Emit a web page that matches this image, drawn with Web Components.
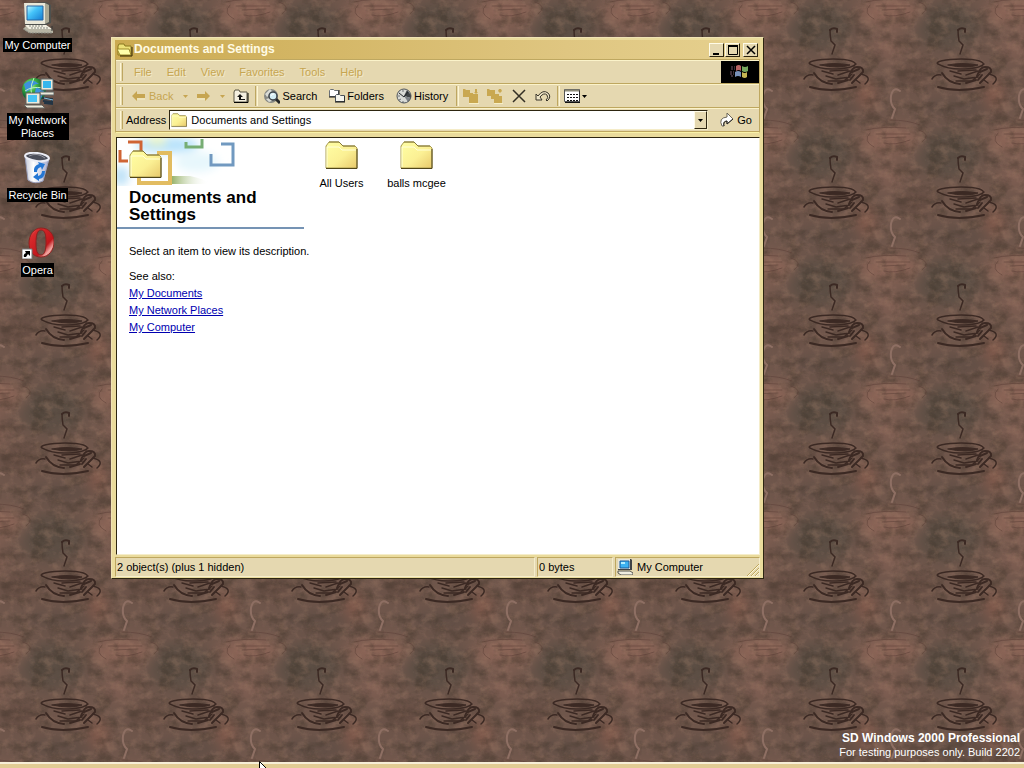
<!DOCTYPE html>
<html lang="en">
<head>
<meta charset="utf-8">
<title>Documents and Settings</title>
<style>
    html, body { height: 100%; margin: 0; }
    body {
        overflow: hidden;
        font: 11px/13px "Liberation Sans", Arial, sans-serif;
        color: #000;
        --face: #e5d8b0;
        --light: #f7efc4;
        --shade: #bea760;
        --gold: #c6a551;
        --dark: #2d2510;
    }
</style>
</head>
<body>
<desk-top>
    <desktop-icon slot="icons" icon="computer">My Computer</desktop-icon>
    <desktop-icon slot="icons" icon="network">My Network Places</desktop-icon>
    <desktop-icon slot="icons" icon="recycle">Recycle Bin</desktop-icon>
    <desktop-icon slot="icons" icon="opera">Opera</desktop-icon>
    <explorer-window slot="window" heading="Documents and Settings">
        <folder-item>All Users</folder-item>
        <folder-item>balls mcgee</folder-item>
    </explorer-window>
</desk-top>

<script>
const folder = `
    <defs><linearGradient id="f" x2="1" y2="1"><stop stop-color="#ffffa4"/><stop offset=".55" stop-color="#fbf094"/><stop offset="1" stop-color="#e8c96c"/></linearGradient></defs>
    <path d="M1 28V6l3-4h10l4 4h12l2 2v20z" fill="url(#f)" stroke="#a89b50"/>
    <path d="M2 27V7h12l3 3h14" fill="none" stroke="#ffffd8"/>
    <path d="M1 28.500h31V9" fill="none" stroke="#50451a"/>
    <path d="M4 2h10l4 4h12" fill="none" stroke="#857838"/>`;

const ICONS = {
    computer: ['0 0 32 32', `
        <defs><linearGradient id="s" x2="1" y2="1"><stop stop-color="#c4f8ff"/><stop offset=".4" stop-color="#45c4fa"/><stop offset="1" stop-color="#1479cf"/></linearGradient></defs>
        <path d="M2 1l22-1 5 3v18l-5 2H3z" fill="#4e514e"/>
        <path d="M2 1h21v21H3z" fill="#e9e7d8"/>
        <path d="M23 1l4 2v17l-4 2z" fill="#aaa894"/>
        <path d="M5 4h16v14H5z" fill="url(#s)" stroke="#2865a0"/>
        <path d="M5 23h19l7 5v3H7L1 27z" fill="#b6b4a4"/>
        <path d="M3 23h21l6 4H7z" fill="#f2f0e2"/>
        <path d="M7 24h15M9 26h17M2 27l6 4h22" stroke="#858780" stroke-dasharray="2 1" fill="none"/>
        <path d="M30 24v5" stroke="#333"/>`],
    zone: ['0 0 16 16', `
        <path d="M1 0h13l1 1v10H1z" fill="#3d4146"/>
        <path d="M1 0h12v10H1z" fill="#e6e5da"/>
        <path d="M3 2h9v7H3z" fill="#3cb2f2" stroke="#1a5a9a"/>
        <path d="M4 3h4v2H4z" fill="#b2eeff"/>
        <path d="M1 12h12l3 2v2H4l-3-2z" fill="#f0eee0" stroke="#55554e"/>`],
    network: ['0 0 32 32', `
        <defs><radialGradient id="g" cx=".35" cy=".3"><stop stop-color="#b0f3a0"/><stop offset=".5" stop-color="#43b444"/><stop offset="1" stop-color="#126e34"/></radialGradient></defs>
        <circle cx="12" cy="13" r="12" fill="url(#g)"/>
        <path d="M2 7q8-7 15 0-8 0-7 5l-6 3zM14 10l8 4-4 10-6-4z" fill="#3d91db"/>
        <path d="M3 14q7-5 18-3M12 1q-6 12 0 23" fill="none" stroke="#bff4c0"/>
        <path d="M19 2h12v11H19zM18 15h14v3H18z" fill="#eceadb" stroke="#5f686b"/>
        <path d="M21 4h8v7h-8z" fill="#36b6ed"/>
        <path d="M4 16h14v11H4zM2 28h18l3 3H5z" fill="#eceadb" stroke="#61615c"/>
        <path d="M6 18h9v7H6z" fill="#48c3f4"/>
        <path d="M20 21l10 1v3l-9-1M22 26l9 1" fill="none" stroke="#233443" stroke-width="2"/>
        <path d="M22 21l9 2" stroke="#8ac2df"/>`],
    recycle: ['0 0 32 32', `
        <defs><linearGradient id="b" x2="1"><stop stop-color="#c5cad9"/><stop offset=".35" stop-color="#fff"/><stop offset="1" stop-color="#a4aacd"/></linearGradient></defs>
        <path d="M3 4l3 24q7 5 15 1l6-22z" fill="url(#b)" stroke="#9a9fba"/>
        <ellipse cx="15" cy="5" rx="12" ry="4" fill="#4c4f5b" stroke="#ecedf5" stroke-width="2" transform="rotate(7 15 5)"/>
        <path d="M7 4q8-4 16 2" fill="none" stroke="#94949c"/>
        <path d="M12 20q-1-6 5-8l-1-2 7 2-3 6-1-3q-4 1-4 5zM23 19q0 7-6 8v2l-6-4 5-4v3q4-1 4-5z" fill="#2577d4"/>`],
    opera: ['0 0 32 32', `
        <defs><linearGradient id="o" x2="1" y2="1"><stop stop-color="#f7a09a"/><stop offset=".2" stop-color="#d82a2c"/><stop offset=".65" stop-color="#c0161b"/><stop offset=".8" stop-color="#f3aaa4"/><stop offset="1" stop-color="#a10c0f"/></linearGradient></defs>
        <path fill-rule="evenodd" d="M19 1c8 0 13 6 13 14s-5 15-13 15S7 24 7 16 12 1 19 1zm0 2c-4 0-5 6-5 13s1 12 5 12 5-6 5-13-1-12-5-12z" fill="url(#o)" stroke="#8e2320"/>
        <path d="M0 22h10v10H0z" fill="#fff" stroke="#777"/>
        <path d="M3 24h5v5l-2-2-2 3H2q-1-3 2-4z" fill="#000"/>`],
    folder: ['0 0 33 30', folder],
    openFolder: ['0 0 16 16', `
        <path d="M1 13V4l1-2h5l1 2h6v9z" fill="#ede177" stroke="#8b7920"/>
        <path d="M0 7h12l2 6H3z" fill="#ffffaa" stroke="#9d892a"/>
        <path d="M3 14h12V5" fill="none" stroke="#302500"/>`],
    back: ['0 0 16 16', `<path d="M1 8l5-5v3h8v4H6v3z" fill="#c6a551"/><path d="M6 11h8" stroke="#f7efc4"/>`],
    forward: ['0 0 16 16', `<path d="M14 8L9 3v3H1v4h8v3z" fill="#c6a551"/><path d="M1 11h8" stroke="#f7efc4"/>`],
    up: ['0 0 16 16', `
        <path d="M1 14V4l1-2h4l1 2h7v10z" fill="#f4efdf" stroke="#5b5745"/>
        <path d="M1 14.500h14V5" fill="none" stroke="#000"/>
        <path d="M7 6l3 3H8v2h4v1H6V9H4z" fill="#111"/>`],
    search: ['0 0 16 16', `
        <circle cx="7" cy="8" r="7" fill="#858783"/>
        <path d="M1 6l5-5 3 3-6 5zM2 11l3 3 3-1-2-3z" fill="#d9dbd5"/>
        <path d="M11 10l5 5" stroke="#252729" stroke-width="3"/>
        <circle cx="9" cy="8" r="4" fill="#d4edf4" stroke="#3e444a" stroke-width="1.500"/>
        <path d="M7 8q0-2 3-2" stroke="#fff" fill="none"/>`],
    folders: ['0 0 16 16', `
        <path d="M.5 8.500v-6l1-1h3l1 1h4v6z" fill="#fff" stroke="#6a7076"/>
        <path d="M6.500 13.500v-6l1-1h3l1 1h4v6z" fill="#f5f5ee" stroke="#4a525b"/>
        <path d="M0 9h6M10 2v4M6 14h10V8" fill="none" stroke="#111"/>`],
    history: ['0 0 16 16', `
        <circle cx="8" cy="8" r="7" fill="#d8dad6"/>
        <path d="M8 8l3-6 4 5v3z" fill="#3d4245"/>
        <path d="M8 8l7 2-3 4z" fill="#7b8085"/>
        <path d="M3 5l5 4 4-5" stroke="#22262a" fill="none"/>
        <path d="M2 8h2M7 2v2M7 13v2M3 12l2-1" stroke="#707478"/>
        <circle cx="8" cy="8" r="7" fill="none" stroke="#50555a"/>`],
    move: ['0 0 16 16', `<path d="M0 9V1h2l1 1h4v3h3v1h5v9H6V9zM12 1v3h-1l2 2 2-2h-1V1z" fill="#c9a851"/><path d="M6 15.500h10" stroke="#f7efc4"/>`],
    copy: ['0 0 16 16', `<path d="M0 8V1h2l1 1h5v4h4v2h3v7H7v-4H4V8zM12 1l-1 2 2 2 2-2-1-2z" fill="#c9a851"/><path d="M7 15.500h9" stroke="#f7efc4"/>`],
    remove: ['0 0 16 16', `<path d="M2 2l12 12M14 2L2 14" stroke="#332f24" stroke-width="1.500"/>`],
    undo: ['0 0 16 16', `<path d="M1 6v6h6L5 9q4-5 7-2 2 3-1 5l1 1q5-4 1-8-5-4-10 3z" fill="#eee4c5" stroke="#39352a"/>`],
    views: ['0 0 16 16', `
        <path d="M.5 1.500h15v12H.5z" fill="#fff" stroke="#555"/>
        <path d="M1 2.500h14" stroke="#8d8b78" stroke-width="2"/>
        <path d="M3 6.500h11M3 9.500h11M3 12.500h11" stroke="#111" stroke-dasharray="2 1"/>
        <path d="M1 14.500h15V3" fill="none" stroke="#111"/>`],
    go: ['0 0 16 16', `<path d="M3 14Q-1 6 8 5V1l6 6-6 5V9Q3 9 5 14z" fill="#fff" stroke="#6b6658"/><path d="M5 14q-1-4 3-5v3l6-5" fill="none" stroke="#222"/>`],
    drop: ['0 0 5 3', `<path d="M0 0h5L2.500 3z" fill="currentColor"/>`],
    minimize: ['0 0 10 10', `<path d="M1 8h6v2H1z"/>`],
    maximize: ['0 0 10 10', `<path d="M.5 1h9v8.500h-9z" fill="none" stroke="#000"/><path d="M0 1h10" stroke="#000" stroke-width="2"/>`],
    close: ['0 0 10 10', `<path d="M1 1l8 8M9 1L1 9" stroke="#000" stroke-width="1.500"/>`],
    flag: ['0 0 20 20', `
        <path d="M6 4q3-2 5 0v5q-2-2-5 0z" fill="#b86463"/><path d="M12 4q3 2 6 0v5q-3 2-6 0z" fill="#76a75f"/>
        <path d="M5 10q3-2 6 0v5q-3-2-6 0z" fill="#7890b8"/><path d="M12 10q3 2 5 0v5q-2 2-5 0z" fill="#c5b552"/>
        <path d="M1 5h4M1 7h4M0 10h4M0 12h4M1 14h3" stroke="#765668" stroke-dasharray="2 1"/>`],
    banner: ['0 0 124 48', `
        <defs>
            <filter id="soft" x="-20%" y="-50%" width="140%" height="200%"><feGaussianBlur stdDeviation="4"/></filter>
            <linearGradient id="grass"><stop stop-color="#98b36c"/><stop offset="1" stop-color="#fff" stop-opacity="0"/></linearGradient>
        </defs>
        <g filter="url(#soft)">
            <ellipse cx="50" cy="7" rx="32" ry="8" fill="#b9e3fb"/><ellipse cx="4" cy="38" rx="8" ry="10" fill="#bfe2f7"/>
            <ellipse cx="80" cy="24" rx="22" ry="10" fill="#e7f7fc"/><ellipse cx="40" cy="3" rx="10" ry="5" fill="#e9f4c5"/>
        </g>
        <path d="M55 38h18q16 3 19 8H55z" fill="url(#grass)"/>
        <g fill="none" stroke-width="3">
            <path d="M11 4h13v11M3 12v11h8" stroke="#cf6434"/>
            <path d="M22 40v5h31V15H40" stroke="#e2bc61" stroke-width="4"/>
            <path d="M69 4v5h16V1" stroke="#76ad74"/>
            <path d="M104 6h12v21H94V16" stroke="#7199c0"/>
        </g>
        <g transform="translate(12 11)">${folder}</g>`],
};

function svg(name, width, height = width) {
    const [viewBox, shapes] = ICONS[name];
    return `<svg viewBox="${viewBox}" width="${width}" height="${height}" aria-hidden="true">${shapes}</svg>`;
}

class CoffeeWallpaper extends HTMLElement {
    connectedCallback() {
        // every tile is 128px square; shapes that cross an edge are repeated on the other side
        const offsets = [[0, 0], [-128, 0], [128, 0], [0, -128], [0, 128], [-128, -128], [-128, 128], [128, -128], [128, 128]];
        const repeat = id => offsets.map(([x, y]) => `<use href="#${id}" x="${x}" y="${y}"/>`).join('');
        this.attachShadow({mode: 'open'}).innerHTML = `
            <style>
                :host { display: block; }
                svg { display: block; width: 100%; height: 100%; }
            </style>
            <svg aria-hidden="true">
                <defs>
                    <filter id="blur" x="-50%" y="-50%" width="200%" height="200%" color-interpolation-filters="sRGB"><feGaussianBlur stdDeviation="7"/></filter>
                    <filter id="dark" x="0" y="0" width="100%" height="100%" color-interpolation-filters="sRGB">
                        <feTurbulence type="fractalNoise" baseFrequency=".06 .08" numOctaves="5" seed="5" stitchTiles="stitch"/>
                        <feColorMatrix values="0 0 0 0 .22  0 0 0 0 .18  0 0 0 0 .14  0 3 0 0 -1.3"/>
                    </filter>
                    <filter id="pale" x="0" y="0" width="100%" height="100%" color-interpolation-filters="sRGB">
                        <feTurbulence type="fractalNoise" baseFrequency=".09 .12" numOctaves="5" seed="12" stitchTiles="stitch"/>
                        <feColorMatrix values="0 0 0 0 .68  0 0 0 0 .52  0 0 0 0 .43  3 0 0 0 -1.4"/>
                    </filter>
                    <g id="patches">
                        <ellipse cx="52" cy="26" rx="32" ry="24" fill="#5c4e44"/>
                        <ellipse cx="20" cy="76" rx="22" ry="12" fill="#644c42"/>
                        <ellipse cx="62" cy="108" rx="36" ry="10" fill="#614e45"/>
                        <ellipse cx="122" cy="12" rx="32" ry="15" fill="#8a6456"/>
                        <ellipse cx="120" cy="48" rx="18" ry="14" fill="#7d5d51"/>
                        <ellipse cx="98" cy="94" rx="10" ry="16" fill="#80594b"/>
                    </g>
                    <g id="ghost" fill="none" stroke-linecap="round">
                        <path d="M132 91q-7-5-9 5-1 9 4 13l-3 9" stroke="#8e6f63" stroke-width="2"/>
                        <path d="M122 120q18 0 30 5M98 130q16-4 40-2M108 134h34M114 138l24-1M116 143q10 3 26-3M151 130q13 4 3 12M102 133q-8 8 4 14" stroke="#573c33" stroke-opacity=".5"/>
                    </g>
                    <pattern id="tile" width="128" height="128" patternUnits="userSpaceOnUse">
                        <rect width="128" height="128" fill="#6f564b"/>
                        <g filter="url(#blur)">${repeat('patches')}</g>
                        <rect width="128" height="128" filter="url(#dark)" opacity=".4"/>
                        <rect width="128" height="128" filter="url(#pale)" opacity=".25"/>
                        ${repeat('ghost')}
                        <g fill="none" stroke="#3b2923" stroke-linecap="round">
                            <path d="M62 30q3-3 7-1v3" stroke-width="2"/>
                            <path d="M62 30q0 5 1 11l4 4-3 9" stroke-width="1.500"/>
                            <path d="M86 66c5-4-5-7-21-7s-27 3-23 5 8 5 22 5 21-2 24-5" stroke-width="1.500"/>
                            <path d="M52 65q13-3 30 0-12 4-30 0z" fill="#3b2923"/>
                            <path d="M46 73q6 10 18 11M70 83l10-3" stroke-width="2"/>
                            <path d="M54 71l11 3M58 76l10 3 14-2M62 71l18-1M70 75l12-4M60 81h16l8-7" stroke-width="1.500"/>
                            <path d="M81 76q3-9 8-9 7 0 6 5l-11 11M84 72l7-3M82 80l4-5" stroke-width="2"/>
                            <path d="M36 79q3-5 9-4M93 74q12 3 4 10M88 80l4 3" stroke-width="1.500"/>
                            <path d="M42 87q20 6 46 0" stroke-width="2"/>
                        </g>
                    </pattern>
                </defs>
                <rect width="100%" height="100%" fill="url(#tile)"/>
            </svg>`;
    }
}

class DeskTop extends HTMLElement {
    connectedCallback() {
        this.attachShadow({mode: 'open'}).innerHTML = `
            <style>
                :host { display: grid; grid-template-rows: 1fr 6px; position: relative; height: 100%; }
                coffee-wallpaper { position: absolute; inset: 0; }
                .icons { position: relative; display: flex; flex-direction: column; align-items: flex-start; }
                ::slotted(explorer-window) { position: absolute; inset: 37px 260px 189px 111px; }
                .taskbar { position: relative; box-sizing: border-box; border-top: 2px solid #f7eed6; background: #e2cc94; }
                .build { position: absolute; right: 4px; bottom: 9px; text-align: right; color: #fff; line-height: 14px; }
                .build b { display: block; font-size: 12px; }
                .pointer { position: absolute; left: 259px; top: calc(100% - 7px); height: 7px; }
            </style>
            <coffee-wallpaper></coffee-wallpaper>
            <div class="icons"><slot name="icons"></slot></div>
            <slot name="window"></slot>
            <div class="build"><b>SD Windows 2000 Professional</b>For testing purposes only. Build 2202</div>
            <div class="taskbar"></div>
            <svg class="pointer" width="12" height="7" aria-hidden="true"><path d="M.5.500v17l10-7z" fill="#fff" stroke="#000"/></svg>`;
    }
}

class DesktopIcon extends HTMLElement {
    connectedCallback() {
        this.attachShadow({mode: 'open'}).innerHTML = `
            <style>
                :host { display: flex; flex-direction: column; align-items: center; gap: 4px; box-sizing: border-box; width: 75px; height: 75px; padding-top: 2px; }
                svg { display: block; flex: none; }
                span { padding: 1px 1px 0; background: #000; color: #fff; text-align: center; max-width: 60px; }
                span.line { max-width: none; white-space: nowrap; }
            </style>
            ${svg(this.getAttribute('icon'), 32)}
            <span class="${this.textContent.length < 14 ? 'line' : ''}"><slot></slot></span>`;
    }
}

class ToolButton extends HTMLElement {
    connectedCallback() {
        const icon = this.getAttribute('icon');
        const label = this.getAttribute('label') || '';
        this.attachShadow({mode: 'open'}).innerHTML = `
            <style>
                :host { display: block; flex: none; }
                button { display: flex; align-items: center; gap: 2px; height: 22px; margin: 0; padding: 0 ${this.textContent ? 6 : 4}px; border: 0; background: none; font: inherit; color: inherit; }
                svg { display: block; flex: none; }
                :host([disabled]) { color: var(--gold); text-shadow: 1px 1px var(--light); }
            </style>
            <button type="button" ${label && `aria-label="${label}"`} ${this.hasAttribute('disabled') ? 'disabled' : ''}>
                ${icon === 'drop' ? svg(icon, 5, 3) : svg(icon, 16)}<slot></slot>${this.hasAttribute('menu') ? svg('drop', 5, 3) : ''}
            </button>`;
    }
}

class FolderItem extends HTMLElement {
    connectedCallback() {
        this.attachShadow({mode: 'open'}).innerHTML = `
            <style>
                :host { display: flex; flex-direction: column; align-items: center; gap: 7px; width: 75px; padding-top: 2px; }
                svg { display: block; }
            </style>
            ${svg('folder', 33, 30)}
            <span><slot></slot></span>`;
    }
}

class WebPane extends HTMLElement {
    connectedCallback() {
        this.attachShadow({mode: 'open'}).innerHTML = `
            <style>
                :host { display: block; white-space: nowrap; }
                svg { display: block; }
                h1 { margin: 0; padding: 3px 12px 4px; border-bottom: 2px solid #7593b4; font-size: 17px; line-height: 17px; white-space: normal; }
                .body { padding: 14px 0 0 12px; line-height: 17px; }
                p { margin: 0 0 8px; }
                a { display: table; color: #0000b0; }
            </style>
            ${svg('banner', 124, 48)}
            <h1>${this.getAttribute('heading')}</h1>
            <div class="body">
                <p>Select an item to view its description.</p>
                See also:
                <a href="#documents">My Documents</a>
                <a href="#network">My Network Places</a>
                <a href="#computer">My Computer</a>
            </div>`;
    }
}

class ExplorerWindow extends HTMLElement {
    connectedCallback() {
        const heading = this.getAttribute('heading');
        this.attachShadow({mode: 'open'}).innerHTML = `
            <style>
                :host {
                    display: flex; flex-direction: column; box-sizing: border-box; padding: 2px 3px 1px;
                    border: 1px solid; border-color: #efe3b5 var(--dark) var(--dark) #efe3b5;
                    background: #eadb9c;
                }
                svg { display: block; flex: none; }
                .title { display: flex; align-items: center; gap: 1px; height: 19px; padding: 0 2px; background: linear-gradient(90deg, #cbaa50, #dfc681 70%, #e6d18f); color: #fffbe4; font-size: 12px; font-weight: bold; }
                .title span { flex: 1; }
                .title button { display: grid; place-items: center; width: 15px; height: 14px; }
                .title .last { margin-left: 2px; }
                button.raised { padding: 0; border: 1px solid; border-color: #fffbe7 var(--dark) var(--dark) #fffbe7; background: var(--face); color: #000; }
                .band { display: flex; align-items: center; box-sizing: border-box; height: 24px; padding-left: 4px; border-top: 1px solid #fbf3ca; border-bottom: 1px solid var(--shade); background: var(--face); }
                .bars { display: flex; flex-direction: column; border: 1px solid var(--shade); border-bottom-color: #faf2a8; }
                .grip { align-self: center; width: 1px; height: 18px; margin-right: 2px; border-left: 1px solid #fff7d3; border-right: 1px solid var(--shade); }
                .menu nav { display: flex; flex: 1; gap: 15px; padding-left: 9px; }
                .menu button { padding: 0; border: 0; background: none; font: inherit; color: var(--gold); text-shadow: 1px 1px #f3eac8; }
                .flag { display: grid; place-items: center; align-self: stretch; width: 38px; background: #000; }
                .sep { width: 1px; height: 20px; margin-left: 2px; border-left: 1px solid var(--shade); border-right: 1px solid #fff7d3; }
                .address { padding-right: 1px; }
                .address label { padding-left: 1px; }
                .combo { display: flex; align-items: center; flex: 1; box-sizing: border-box; height: 20px; margin: 0 5px 0 3px; padding-left: 1px; border: 1px solid; border-color: var(--dark) #f5ecc8 #f5ecc8 var(--dark); background: #fff; }
                .combo input { flex: 1; min-width: 0; padding: 0 0 0 4px; border: 0; outline: 0; background: none; font: inherit; }
                .combo button { display: grid; place-items: center; width: 13px; height: 18px; }
                .client { display: flex; flex: 1; min-height: 0; overflow: hidden; margin: 4px 0 2px 1px; border: 1px solid; border-color: var(--dark) #f5edcb #f5edcb var(--dark); background: #fff; }
                web-pane { width: 187px; flex: none; }
                .items { display: flex; flex-wrap: wrap; align-content: flex-start; flex: 1; }
                .status { display: flex; gap: 2px; height: 20px; background: var(--face); }
                .status div { display: flex; align-items: center; gap: 4px; box-sizing: border-box; width: 76px; padding-left: 1px; border: 1px solid; border-color: var(--shade) #f5edcb #f5edcb var(--shade); }
                .status .count { flex: 1; }
                .status .zone { width: 145px; }
                .status .zone span { flex: 1; }
                .size { align-self: flex-end; }
            </style>
            <div class="title">
                ${svg('openFolder', 16)}<span>${heading}</span>
                <button class="raised" aria-label="Minimize">${svg('minimize', 10)}</button>
                <button class="raised" aria-label="Maximize">${svg('maximize', 10)}</button>
                <button class="raised last" aria-label="Close">${svg('close', 10)}</button>
            </div>
            <div class="bars">
                <div class="band menu">
                    <i class="grip"></i>
                    <nav>${['File', 'Edit', 'View', 'Favorites', 'Tools', 'Help'].map(name => `<button type="button">${name}</button>`).join('')}</nav>
                    <div class="flag">${svg('flag', 20)}</div>
                </div>
                <div class="band">
                    <i class="grip"></i>
                    <tool-button icon="back" disabled>Back</tool-button>
                    <tool-button icon="drop" label="Back list" disabled></tool-button>
                    <tool-button icon="forward" label="Forward" disabled></tool-button>
                    <tool-button icon="drop" label="Forward list" disabled></tool-button>
                    <tool-button icon="up" label="Up"></tool-button>
                    <i class="sep"></i>
                    <tool-button icon="search">Search</tool-button>
                    <tool-button icon="folders">Folders</tool-button>
                    <tool-button icon="history">History</tool-button>
                    <i class="sep"></i>
                    <tool-button icon="move" label="Move To" disabled></tool-button>
                    <tool-button icon="copy" label="Copy To" disabled></tool-button>
                    <tool-button icon="remove" label="Delete"></tool-button>
                    <tool-button icon="undo" label="Undo"></tool-button>
                    <i class="sep"></i>
                    <tool-button icon="views" label="Views" menu></tool-button>
                </div>
                <div class="band address">
                    <i class="grip"></i>
                    <label for="path">Address</label>
                    <div class="combo">
                        ${svg('folder', 16)}
                        <input id="path" type="text" value="${heading}">
                        <button class="raised" aria-label="Address list">${svg('drop', 5, 3)}</button>
                    </div>
                    <tool-button icon="go">Go</tool-button>
                </div>
            </div>
            <div class="client">
                <web-pane heading="${heading}"></web-pane>
                <div class="items"><slot></slot></div>
            </div>
            <div class="status">
                <div class="count">2 object(s) (plus 1 hidden)</div>
                <div>0 bytes</div>
                <div class="zone">
                    ${svg('zone', 16)}<span>My Computer</span>
                    <svg class="size" width="12" height="12" aria-hidden="true"><path d="M0 12L12 0M4 12l8-8M8 12l4-4" stroke="#bea760"/><path d="M1 12L12 1M5 12l7-7M9 12l3-3" stroke="#fff7d3"/></svg>
                </div>
            </div>`;
    }
}

customElements.define('coffee-wallpaper', CoffeeWallpaper);
customElements.define('desktop-icon', DesktopIcon);
customElements.define('tool-button', ToolButton);
customElements.define('folder-item', FolderItem);
customElements.define('web-pane', WebPane);
customElements.define('explorer-window', ExplorerWindow);
customElements.define('desk-top', DeskTop);
</script>
</body>
</html>
